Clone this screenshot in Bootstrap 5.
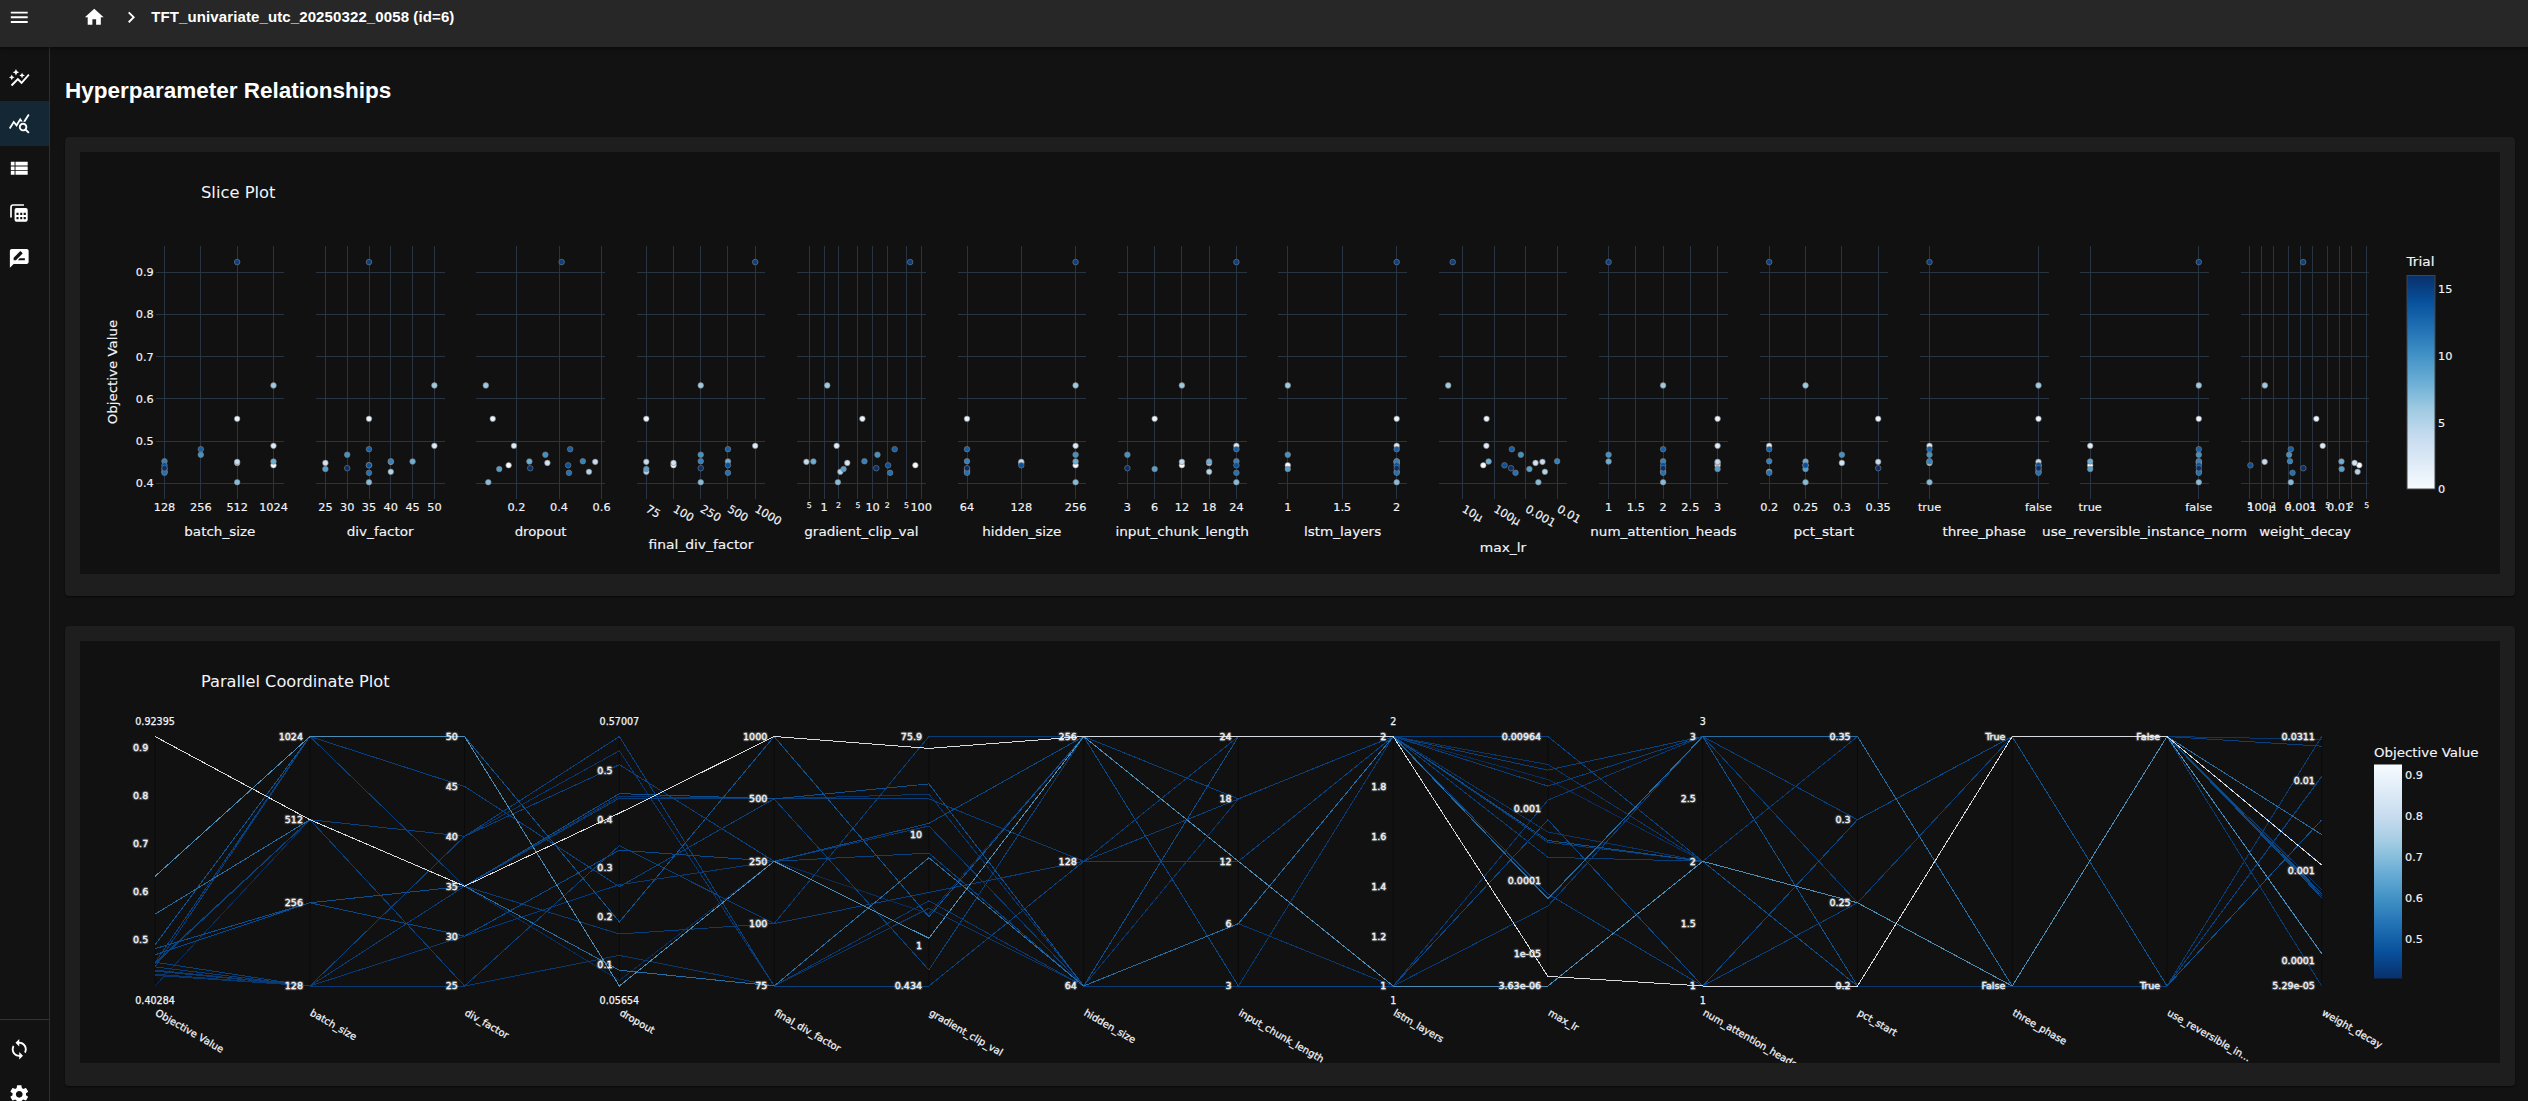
<!DOCTYPE html>
<html lang="en" data-bs-theme="dark">
<head>
<meta charset="utf-8">
<title>Hyperparameter Relationships</title>
<link href="https://cdn.jsdelivr.net/npm/bootstrap@5.3.0/dist/css/bootstrap.min.css" rel="stylesheet">
<style>
  body { background: #121212; color: #fff; font-family: "Liberation Sans", Arial, sans-serif; height: 1101px; overflow: hidden; }
  .topbar { height: 47px; background: #272727; box-shadow: 0 2px 4px rgba(0,0,0,.4); padding: 0 0 13px 0; z-index: 2; }
  .ico { width: 22.5px; height: 22.5px; fill: #fff; display: block; flex: none; }
  .ico-home { margin-left: 7.75px; }
  .ico-chevron { margin-left: 14.5px; }
  .crumb-title { margin-left: 9px; font-size: 15px; font-weight: 700; line-height: 20px; letter-spacing: .11px; white-space: nowrap; }
  .menu-cell { width: 75px; padding-left: 7.75px; }
  .side { width: 50px; background: #121212; border-right: 1px solid #2f2f2f; }
  .side-link { height: 45px; padding-left: 7.75px; flex: none; display: flex; align-items: center; }
  .side-link.current { background: #142735; }
  .side-top { padding-top: 9px; }
  .side-foot { height: 82px; border-top: 1px solid #333; padding-top: 7px; overflow: hidden; }
  .content { padding: 0 13px 0 15px; }
  .page-title { font-size: 22.5px; font-weight: 700; line-height: 28px; margin: 30px 0 32px; }
  .panel { background: #1e1e1e; border-radius: 4px; padding: 15px 15px 22px; height: 459px; margin-bottom: 30px; box-shadow: 0 1px 2px rgba(0,0,0,.6); }
  .panel.second { height: 460px; }
  .plot { display: block; width: 2420px; height: 422px; background: #111; overflow: hidden; }
  .plot text { font-family: "DejaVu Sans", Verdana, sans-serif; fill: #f2f5fa; stroke: #f2f5fa; stroke-width: .15px; }
  .plot text.plain { stroke: none; }
  .plot text.glow { stroke-width: .35px; text-shadow: 1px 1px 1px rgba(255,255,255,.13), -1px -1px 1px rgba(255,255,255,.13), 1px -1px 1px rgba(255,255,255,.13), -1px 1px 1px rgba(255,255,255,.13); }
  .plot text.firm { stroke-width: .25px; }
  .grid { stroke: #283442; stroke-width: 1; shape-rendering: crispEdges; }
  .trial-line { fill: none; stroke-width: 1; shape-rendering: crispEdges; }
</style>
<script src="https://cdn.jsdelivr.net/npm/bootstrap@5.3.0/dist/js/bootstrap.bundle.min.js"></script>
</head>
<body class="d-flex flex-column m-0">
<header class="topbar d-flex align-items-center position-relative flex-shrink-0">
  <div class="menu-cell"><svg class="ico" viewBox="0 0 24 24"><path d="M3 18h18v-2H3zm0-5h18v-2H3zm0-7v2h18V6z"/></svg></div>
  <svg class="ico ico-home" viewBox="0 0 24 24"><path d="M10 20v-6h4v6h5v-8h3L12 3 2 12h3v8z"/></svg>
  <svg class="ico ico-chevron" viewBox="0 0 24 24"><path d="M10 6 8.590 7.410 13.170 12l-4.580 4.590L10 18l6-6z"/></svg>
  <div class="crumb-title">TFT_univariate_utc_20250322_0058 (id=6)</div>
</header>
<div class="d-flex flex-grow-1 overflow-hidden">
  <nav class="side d-flex flex-column justify-content-between flex-shrink-0">
    <div class="side-top">
      <a class="side-link"><svg class="ico" viewBox="0 0 24 24"><path d="M14.060 9.940 12 9l2.060-.94L15 6l.94 2.060L18 9l-2.060.94L15 12zM4 14l.94-2.060L7 11l-2.060-.94L4 8l-.94 2.060L1 11l2.060.94zm4.500-5 1.090-2.410L12 5.500 9.590 4.410 8.500 2 7.410 4.410 5 5.500l2.410 1.090zm-4 11.500 6-6.010 4 4L23 8.930l-1.410-1.410-7.090 7.970-4-4L3 19z"/></svg></a>
      <a class="side-link current"><svg class="ico" viewBox="0 0 24 24"><path d="M19.880 18.470c.44-.7.7-1.510.7-2.390 0-2.490-2.010-4.500-4.500-4.500s-4.500 2.010-4.500 4.500 2.010 4.500 4.490 4.500c.88 0 1.700-.26 2.390-.7L21.580 23 23 21.580zm-3.800.11c-1.380 0-2.500-1.120-2.500-2.500s1.120-2.500 2.500-2.500 2.500 1.120 2.500 2.500-1.120 2.500-2.500 2.500m-.36-8.500c-.74.02-1.450.18-2.100.45l-.55-.83-3.800 6.180-3.010-3.520-3.630 5.810L1 17l5-8 3 3.500L13 6zm2.590.5c-.64-.28-1.330-.45-2.050-.49L21.380 2 23 3.180z"/></svg></a>
      <a class="side-link"><svg class="ico" viewBox="0 0 24 24"><path d="M3 14h4v-4H3zm0 5h4v-4H3zM3 9h4V5H3zm5 5h13v-4H8zm0 5h13v-4H8zM8 5v4h13V5z"/></svg></a>
      <a class="side-link"><svg class="ico" viewBox="0 0 24 24"><path d="M3.200 16.500V5.500a2.300 2.300 0 0 1 2.300-2.300H17" fill="none" stroke="#fff" stroke-width="1.800"/><path fill-rule="evenodd" d="M9 6.500h10a2 2 0 0 1 2 2V19a2 2 0 0 1-2 2H9a2 2 0 0 1-2-2V8.500a2 2 0 0 1 2-2zm0 5v2.300h2.300v-2.300zm4 0v2.300h2.200v-2.300zm3.700 0v2.300h2.300v-2.300zM9 16v2.500h2.300V16zm4 0v2.500h2.200V16zm3.700 0v2.500h2.300V16z"/></svg></a>
      <a class="side-link"><svg class="ico" viewBox="0 0 24 24"><path d="M20 2H4c-1.100 0-1.990.9-1.990 2L2 22l4-4h14c1.100 0 2-.9 2-2V4c0-1.100-.9-2-2-2M6 14v-2.470l6.880-6.880c.2-.2.51-.2.71 0l1.770 1.770c.2.2.2.51 0 .71L8.470 14zm12 0h-7.500l2-2H18z"/></svg></a>
    </div>
    <div class="side-foot">
      <a class="side-link"><svg class="ico" viewBox="0 0 24 24"><path d="M12 4V1L8 5l4 4V6c3.310 0 6 2.690 6 6 0 1.010-.25 1.970-.7 2.800l1.460 1.460C19.540 15.030 20 13.570 20 12c0-4.420-3.580-8-8-8m0 14c-3.310 0-6-2.690-6-6 0-1.010.25-1.970.7-2.800L5.240 7.740C4.460 8.970 4 10.430 4 12c0 4.420 3.580 8 8 8v3l4-4-4-4z"/></svg></a>
      <a class="side-link"><svg class="ico" viewBox="0 0 24 24"><path d="M19.140 12.940c.04-.3.06-.61.06-.94 0-.32-.02-.64-.07-.94l2.030-1.580c.18-.14.23-.41.12-.61l-1.920-3.320c-.12-.22-.37-.29-.59-.22l-2.390.96c-.5-.38-1.030-.7-1.620-.94l-.36-2.540c-.04-.24-.24-.41-.48-.41h-3.840c-.24 0-.43.17-.47.41l-.36 2.540c-.59.24-1.130.57-1.620.94l-2.390-.96c-.22-.08-.47 0-.59.22L2.740 8.870c-.12.21-.08.47.12.61l2.030 1.580c-.05.3-.09.63-.09.94s.02.64.07.94l-2.030 1.580c-.18.14-.23.41-.12.61l1.920 3.320c.12.22.37.29.59.22l2.390-.96c.5.38 1.030.7 1.620.94l.36 2.540c.05.24.24.41.48.41h3.840c.24 0 .44-.17.47-.41l.36-2.540c.59-.24 1.130-.56 1.620-.94l2.390.96c.22.08.47 0 .59-.22l1.920-3.320c.12-.22.07-.47-.12-.61zM12 15.600c-1.980 0-3.600-1.620-3.600-3.600s1.620-3.600 3.600-3.600 3.600 1.620 3.600 3.600-1.620 3.600-3.600 3.600"/></svg></a>
    </div>
  </nav>
  <main class="content flex-grow-1">
    <h1 class="page-title">Hyperparameter Relationships</h1>
    <section class="panel"><svg id="slice" class="plot" viewBox="80 152 2420 422"></svg></section>
    <section class="panel second"><svg id="parallel" class="plot" viewBox="80 641 2420 422"></svg></section>
  </main>
</div>
<script>
const NS = 'http://www.w3.org/2000/svg';
const BLUES = [[247,251,255],[222,235,247],[198,219,239],[158,202,225],[107,174,214],[66,146,198],[33,113,181],[8,81,156],[8,48,107]];
/* colour at t on the Blues scale; mix < 1 blends it into the plot background */
function blue(t, mix) {
  const p = Math.max(0, Math.min(1, t)) * 8, i = Math.min(7, Math.floor(p)), f = p - i, m = mix || 1;
  return 'rgb(' + BLUES[i].map((c, k) => Math.round((c + (BLUES[i+1][k] - c) * f) * m + 17 * (1 - m))).join(',') + ')';
}
function el(parent, tag, attrs, text) {
  const e = document.createElementNS(NS, tag);
  for (const k in attrs) e.setAttribute(k, attrs[k]);
  if (text !== undefined) e.textContent = text;
  parent.appendChild(e);
  return e;
}
function label(parent, x, y, text, size, anchor, width, extra) {
  const a = Object.assign({ x: x, y: y, 'font-size': size, 'text-anchor': anchor || 'start' }, extra || {});
  if (width) { a.textLength = width; a.lengthAdjust = 'spacingAndGlyphs'; }
  return el(parent, 'text', a, text);
}
function colorbar(parent, id, x, y, w, h, reversed, stroke) {
  const g = el(parent, 'linearGradient', { id: id, x1: 0, y1: 1, x2: 0, y2: 0 });
  BLUES.forEach((c, i) => el(g, 'stop', { offset: i / 8, 'stop-color': blue(reversed ? 1 - i / 8 : i / 8) }));
  el(parent, 'rect', { x: x, y: y, width: w, height: h, fill: 'url(#' + id + ')', stroke: stroke, 'stroke-width': 1 });
}

/* one entry per trial, 0 to 16 */
const L = Math.log10;
const F = {
  value:   [.443,.553,.489,.4485,.451,.4275,.632,.40284,.452,.434,.468,.4525,.425,.481,.4428,.92395,.436],
  batch:   [3,2,3,2,2,0,3,2,3,0,1,0,0,1,0,2,0],
  div:     [35,35,50,25,40,40,50,35,45,25,30,40,35,35,35,35,30],
  dropout: [.1636,.089,.1885,.3455,.57007,.5407,.05654,.068,.261,.1196,.336,.512,.447,.4526,.443,.4124,.265],
  fdiv:    [1,0,4,1,0,0,2,2,3,0,2,2,3,3,3,4,2],
  clip:    [1.880,.79,.26,.479,-.3625,.336,.067,.286,-.218,.403,1.10,.832,1.361,1.454,1.319,1.773,1.076],
  hidden:  [2,0,2,1,1,0,2,2,2,0,2,0,0,0,1,2,0],
  chunk:   [2,1,4,3,2,3,2,4,3,1,0,4,4,4,4,4,0],
  lstm:    [1,2,2,2,2,2,1,2,2,1,1,2,2,2,2,2,2],
  lr:      [596,604,603.5,724,741,747,510,731,609,709,688,777,675,666,648,521,664].map(v => -5 + (v - 545) / 77.7),
  heads:   [3,3,3,3,3,2,2,2,1,3,1,2,2,2,2,1,2],
  pct:     [.25,.35,.2,.3,.35,.2,.25,.25,.25,.25,.3,.2,.2,.2,.25,.2,.35],
  three:   [0,0,1,1,0,0,0,1,1,0,1,1,0,1,0,1,0],
  rev:     [0,1,0,1,1,1,1,1,0,0,1,1,1,1,1,1,1],
  wd:      [1172,1071,1086,1161,949.5,1168,950,1011,1130,1130.5,1007,1009,1015,1011,916,1040,1040.5].map(v => -3 + (v - 1034) / 91.7)
};

/* ---------- slice plot ---------- */
const S = document.getElementById('slice');
label(S, 201, 198.3, 'Slice Plot', 16, 'start', 74.5, { class:'plain' });
const lin = (a, xa, b, xb) => v => xa + (v - a) * (xb - xa) / (b - a);
const yPix = lin(.9, 272.2, .4, 483.4);
const subs = [
  { k:'batch', n:'batch_size', w:71, f:lin(0,164.5,3,273.5), t:[[0,'128'],[1,'256'],[2,'512'],[3,'1024']] },
  { k:'div', n:'div_factor', w:67, f:lin(25,325.4,50,434.4), t:[25,30,35,40,45,50].map(v=>[v,''+v]) },
  { k:'dropout', n:'dropout', w:51.8, f:lin(.2,516.4,.6,601.6), t:[[.2,'0.2'],[.4,'0.4'],[.6,'0.6']] },
  { k:'fdiv', n:'final_div_factor', w:105, f:lin(0,646.3,4,755.2), rot:1, ny:548.7, t:[[0,'75'],[1,'100'],[2,'250'],[3,'500'],[4,'1000']] },
  { k:'clip', n:'gradient_clip_val', w:114.3, f:lin(0,824,2,921.2), t:[[L(.5),'5',1],[0,'1'],[L(2),'2',1],[L(5),'5',1],[1,'10'],[L(20),'2',1],[L(50),'5',1],[2,'100']] },
  { k:'hidden', n:'hidden_size', w:79.2, f:lin(0,967,2,1075.6), t:[[0,'64'],[1,'128'],[2,'256']] },
  { k:'chunk', n:'input_chunk_length', w:133.5, f:lin(0,1127.4,4,1236.4), t:[[0,'3'],[1,'6'],[2,'12'],[3,'18'],[4,'24']] },
  { k:'lstm', n:'lstm_layers', w:77.3, f:lin(1,1287.8,2,1396.7), t:[[1,'1'],[1.5,'1.5'],[2,'2']] },
  { k:'lr', n:'max_lr', w:46.5, f:lin(-5,1462.5,-2,1557.6), rot:1, ny:551.7, t:[[-5,'10µ'],[-4,'100µ'],[-3,'0.001'],[-2,'0.01']] },
  { k:'heads', n:'num_attention_heads', w:146.3, f:lin(1,1608.6,3,1717.6), t:[1,1.5,2,2.5,3].map(v=>[v,''+v]) },
  { k:'pct', n:'pct_start', w:60.5, f:lin(.2,1769.2,.35,1878.2), t:[.2,.25,.3,.35].map(v=>[v,''+v]) },
  { k:'three', n:'three_phase', w:83.5, f:lin(1,1929.5,0,2038.5), t:[[1,'true'],[0,'false']] },
  { k:'rev', n:'use_reversible_instance_norm', w:205, f:lin(0,2090.2,1,2198.8), t:[[0,'true'],[1,'false']] },
  { k:'wd', n:'weight_decay', w:91.7, f:lin(-3,2300.6,-2,2339.6), t:[[L(5e-5),'5',1],[-4,'100µ'],[L(2e-4),'2',1],[L(5e-4),'5',1],[-3,'0.001'],[L(2e-3),'2',1],[L(5e-3),'5',1],[-2,'0.01'],[L(.02),'2',1],[L(.05),'5',1]] }
];
const snap = v => Math.floor(v) + .5;
subs.forEach((s, i) => {
  const x0 = 155.5 + 160.4 * i, x1 = x0 + 128.6;
  s.t.forEach(t => { const x = snap(s.f(t[0])); el(S, 'line', { class:'grid', x1:x, x2:x, y1:246, y2:499 }); });
  [.4,.5,.6,.7,.8,.9].forEach(v => { const y = snap(yPix(v)); el(S, 'line', { class:'grid', x1:x0, x2:x1, y1:y, y2:y }); });
  F.value.forEach((v, k) => el(S, 'circle', { cx:s.f(F[s.k][k]), cy:yPix(v), r:2.8, fill:blue(k / 16), stroke:'#808080', 'stroke-width':.6 }));
  s.t.forEach(t => {
    const x = s.f(t[0]);
    if (s.rot) label(S, 0, 0, t[1], 11.3, 'start', 0, { transform:'translate(' + (x - 1.3) + ',511.2) rotate(30)' });
    else if (t[2]) label(S, x, 507.8, t[1], 7.9, 'middle');
    else label(S, x, 511, t[1], 11.3, 'middle');
  });
  label(S, x0 + 64.3, s.ny || 535.8, s.n, 13, 'middle', s.w);
});
[.4,.5,.6,.7,.8,.9].forEach(v => label(S, 153.7, yPix(v) + 4, v.toFixed(1), 11.3, 'end'));
label(S, 0, 0, 'Objective Value', 13, 'middle', 104.5, { transform:'translate(117.3,372) rotate(-90)' });
label(S, 2406.5, 266.3, 'Trial', 13, 'start', 28);
colorbar(S, 'cbTrial', 2407, 275.5, 28, 213.5, false, '#444');
[[15,289.3],[10,356],[5,422.8],[0,489.3]].forEach(t => label(S, 2438, t[1] + 4, t[0], 11.3));

/* ---------- parallel coordinates ---------- */
const P = document.getElementById('parallel');
label(P, 201, 687.3, 'Parallel Coordinate Plot', 16, 'start', 188.5, { class:'plain' });
const cat = a => a.map((v, i) => [i, v]);
const axes = [
  { k:'value', n:'Objective Value', r:[.40284,.92395], t:[.5,.6,.7,.8,.9].map(v=>[v,''+v]), ends:['0.40284','0.92395'] },
  { k:'batch', n:'batch_size', r:[0,3], t:cat(['128','256','512','1024']) },
  { k:'div', n:'div_factor', r:[25,50], t:[25,30,35,40,45,50].map(v=>[v,''+v]) },
  { k:'dropout', n:'dropout', r:[.05654,.57007], t:[.1,.2,.3,.4,.5].map(v=>[v,''+v]), ends:['0.05654','0.57007'] },
  { k:'fdiv', n:'final_div_factor', r:[0,4], t:cat(['75','100','250','500','1000']) },
  { k:'clip', n:'gradient_clip_val', r:[-.3625,1.880], t:[[-.3625,'0.434'],[0,'1'],[1,'10'],[1.88,'75.9']] },
  { k:'hidden', n:'hidden_size', r:[0,2], t:cat(['64','128','256']) },
  { k:'chunk', n:'input_chunk_length', r:[0,4], t:cat(['3','6','12','18','24']) },
  { k:'lstm', n:'lstm_layers', r:[1,2], t:[1,1.2,1.4,1.6,1.8,2].map(v=>[v,''+v]), ends:['1','2'] },
  { k:'lr', n:'max_lr', r:[L(3.63e-6),L(.00964)], t:[[L(3.63e-6),'3.63e-06'],[-5,'1e-05'],[-4,'0.0001'],[-3,'0.001'],[L(.00964),'0.00964']] },
  { k:'heads', n:'num_attention_heads', r:[1,3], t:[1,1.5,2,2.5,3].map(v=>[v,''+v]), ends:['1','3'] },
  { k:'pct', n:'pct_start', r:[.2,.35], t:[.2,.25,.3,.35].map(v=>[v,''+v]) },
  { k:'three', n:'three_phase', r:[0,1], t:[[0,'False'],[1,'True']] },
  { k:'rev', n:'use_reversible_in...', r:[0,1], t:[[0,'True'],[1,'False']] },
  { k:'wd', n:'weight_decay', r:[L(5.29e-5),L(.0311)], t:[[L(5.29e-5),'5.29e-05'],[-4,'0.0001'],[-3,'0.001'],[-2,'0.01'],[L(.0311),'0.0311']] }
];
const ax = i => 155.1 + 154.76 * i;
const ay = (a, v) => 986 - Math.max(0, Math.min(1, (v - a.r[0]) / (a.r[1] - a.r[0]))) * 249.5;
axes.forEach((a, i) => el(P, 'line', { x1:ax(i), x2:ax(i), y1:736.5, y2:986, stroke:'#0b0b0b', 'stroke-width':1 }));
F.value.map((v, k) => k).sort((a, b) => F.value[a] - F.value[b]).forEach(k => {
  const pts = axes.map((a, i) => ax(i).toFixed(1) + ',' + ay(a, F[a.k][k]).toFixed(1)).join(' ');
  const t = (F.value[k] - .40284) / (.92395 - .40284);
  el(P, 'polyline', { class:'trial-line', points:pts, stroke:blue(1 - t, .86) });
});
axes.forEach((a, i) => {
  const x = ax(i);
  a.t.forEach(t => label(P, x - 6.9, ay(a, t[0]) + 3.4, t[1], 9.5, 'end', 0, { class:'glow' }));
  if (a.ends) {
    label(P, x, 1004.2, a.ends[0], 9.6, 'middle', 0, { class:'firm' });
    label(P, x, 725.2, a.ends[1], 9.6, 'middle', 0, { class:'firm' });
  }
  label(P, 0, 0, a.n, 9.85, 'start', 0, { class:'firm', transform:'translate(' + (x - .5) + ',1014.7) rotate(30)' });
});
label(P, 2374, 757, 'Objective Value', 13, 'start', 104.5);
colorbar(P, 'cbObj', 2374, 764.5, 28, 214, true, 'none');
[[.9,775],[.8,816],[.7,857],[.6,898],[.5,939]].forEach(t => label(P, 2405, t[1] + 4, t[0], 11.3));
</script>
</body>
</html>
